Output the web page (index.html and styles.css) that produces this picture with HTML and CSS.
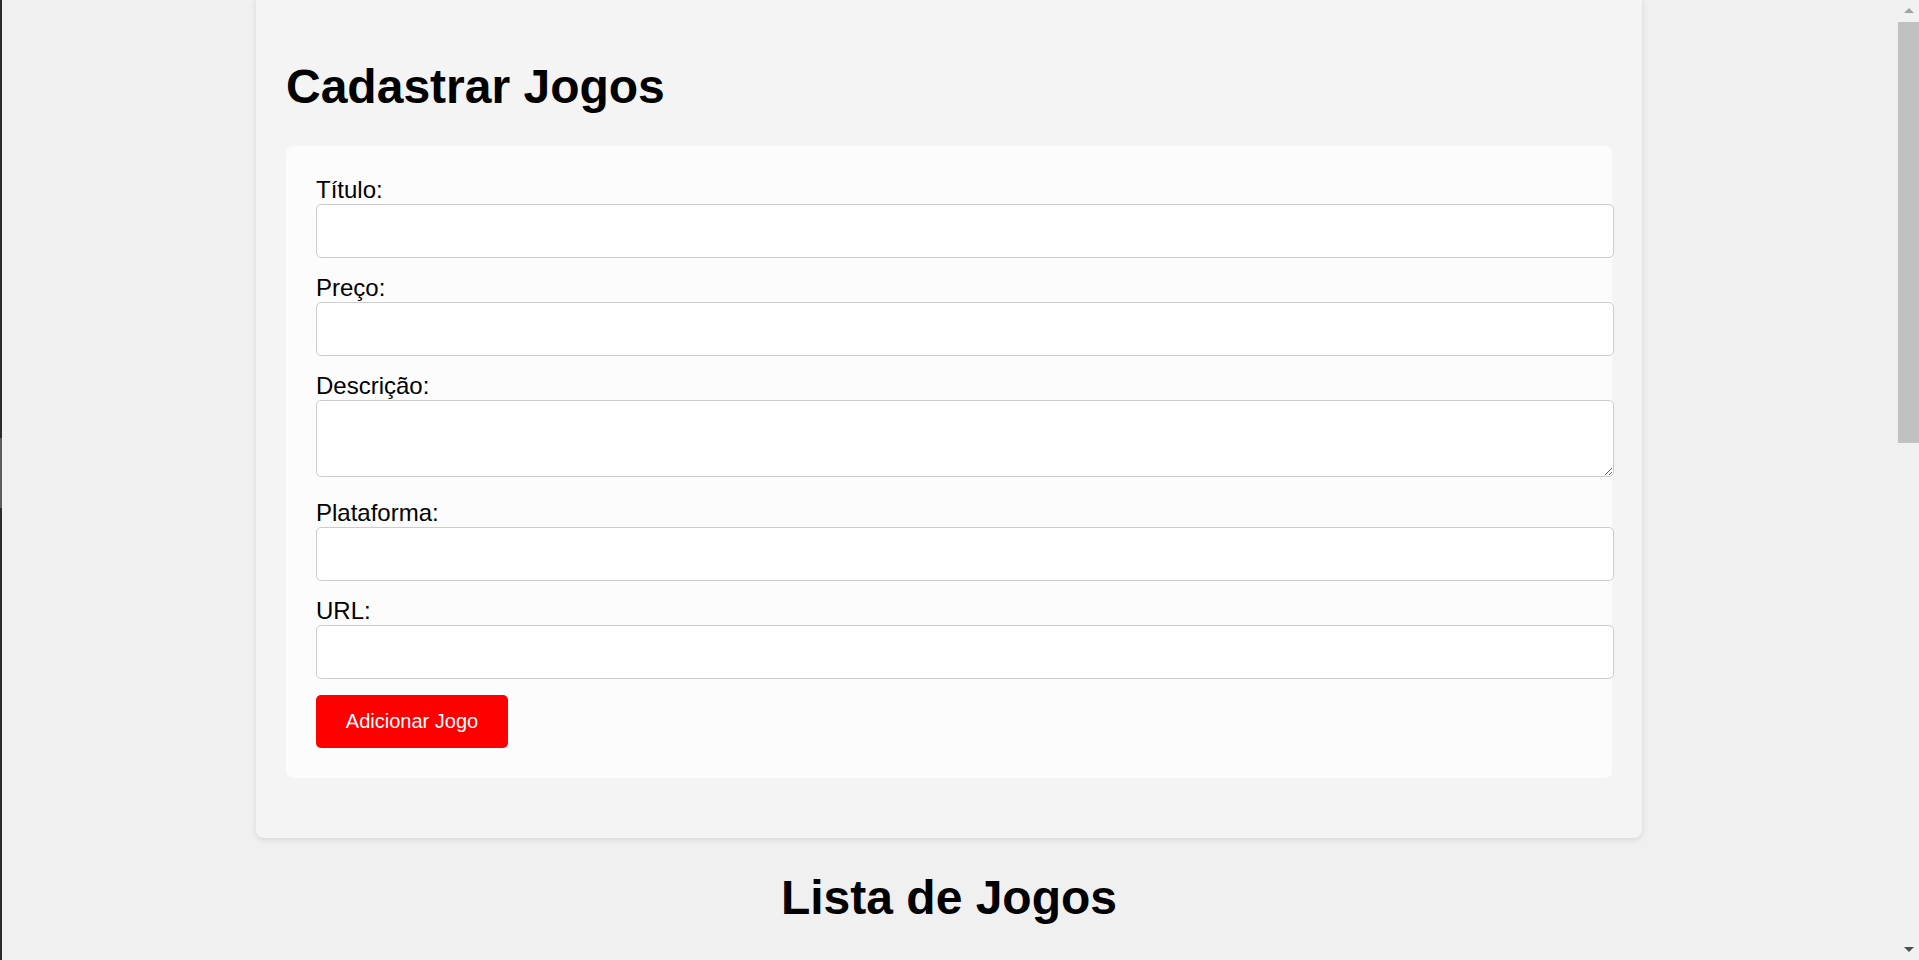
FILE: index.html
```html
<!DOCTYPE html>
<html lang="pt-BR">
<head>
<meta charset="utf-8">
<title>Cadastrar Jogos</title>
<link rel="stylesheet" href="styles.css">
</head>
<body>
  <div class="window-edge"><span class="edge-mark"></span></div>
  <div class="viewport">
    <main class="container">
      <section class="card">
        <h1 class="card-title">Cadastrar Jogos</h1>
        <form class="form-box">
          <label class="field-label" for="titulo">Título:</label>
          <input class="field-input" id="titulo" type="text">
          <label class="field-label" for="preco">Preço:</label>
          <input class="field-input" id="preco" type="text">
          <label class="field-label" for="descricao">Descrição:</label>
          <textarea class="field-textarea" id="descricao"></textarea>
          <label class="field-label" for="plataforma">Plataforma:</label>
          <input class="field-input" id="plataforma" type="text">
          <label class="field-label" for="url">URL:</label>
          <input class="field-input" id="url" type="text">
          <button class="submit-btn" type="button">Adicionar Jogo</button>
        </form>
      </section>
      <h2 class="list-title">Lista de Jogos</h2>
    </main>
  </div>
  <div class="scrollbar">
    <div class="sb-btn"><span class="sb-arrow-up"></span></div>
    <div class="sb-track"><div class="sb-thumb"></div></div>
    <div class="sb-btn"><span class="sb-arrow-down"></span></div>
  </div>
</body>
</html>
```

FILE: styles.css
```css
html, body {
  margin: 0;
  padding: 0;
  height: 960px;
  overflow: hidden;
}

body {
  display: flex;
  background: #f0f0f0;
  font-family: "Liberation Sans", Arial, sans-serif;
  color: #000;
}

.window-edge {
  position: fixed;
  left: 0;
  top: 0;
  width: 2px;
  height: 960px;
  background: #2b2b2b;
  z-index: 5;
}

.edge-mark {
  display: block;
  margin-top: 438px;
  height: 70px;
  background: #5c5c5c;
}

.viewport {
  flex: 1;
  height: 960px;
  overflow: hidden;
  background: #f0f0f0;
}

.container {
  display: flex;
  flex-direction: column;
  align-items: center;
}

.card {
  box-sizing: border-box;
  width: 1386px;
  margin-top: -3px;
  padding: 30px;
  background: #f4f4f4;
  border-radius: 0 0 8px 8px;
  box-shadow: 0 2px 6px rgba(0, 0, 0, 0.1);
}

.card-title {
  margin: 32px 0;
  font-size: 48px;
  line-height: 55px;
  font-weight: bold;
}

.form-box {
  display: flex;
  flex-direction: column;
  align-items: flex-start;
  margin: 0 0 30px;
  padding: 30px;
  background: #fcfcfc;
  border-radius: 7px;
}

.field-label {
  display: block;
  font-size: 24px;
  line-height: 28px;
}

.field-input,
.field-textarea {
  display: block;
  box-sizing: content-box;
  width: 100%;
  margin: 0 0 16px;
  padding: 0 15px;
  border: 1px solid #cccccc;
  border-radius: 5px;
  background: #ffffff;
  font-family: "Liberation Sans", Arial, sans-serif;
  font-size: 20px;
  outline: none;
}

.field-input {
  height: 52px;
}

.field-textarea {
  height: 75px;
  margin-bottom: 22px;
  resize: vertical;
}

.submit-btn {
  display: block;
  width: 192px;
  height: 53px;
  padding: 0;
  border: none;
  border-radius: 5px;
  background: #ff0000;
  color: #ffffff;
  font-family: "Liberation Sans", Arial, sans-serif;
  font-size: 20px;
}

.list-title {
  margin: 32px 0;
  font-size: 48px;
  line-height: 55px;
  font-weight: bold;
  text-align: center;
}

.scrollbar {
  width: 21px;
  height: 960px;
  display: flex;
  flex-direction: column;
  background: #f1f1f1;
}

.sb-btn {
  height: 21px;
  display: flex;
  align-items: center;
  justify-content: center;
}

.sb-arrow-up {
  width: 0;
  height: 0;
  border-left: 5px solid transparent;
  border-right: 5px solid transparent;
  border-bottom: 5px solid #a3a3a3;
}

.sb-arrow-down {
  width: 0;
  height: 0;
  border-left: 5px solid transparent;
  border-right: 5px solid transparent;
  border-top: 5px solid #505050;
}

.sb-track {
  flex: 1;
  padding-top: 1px;
}

.sb-thumb {
  height: 421px;
  background: #c1c1c1;
}
```
